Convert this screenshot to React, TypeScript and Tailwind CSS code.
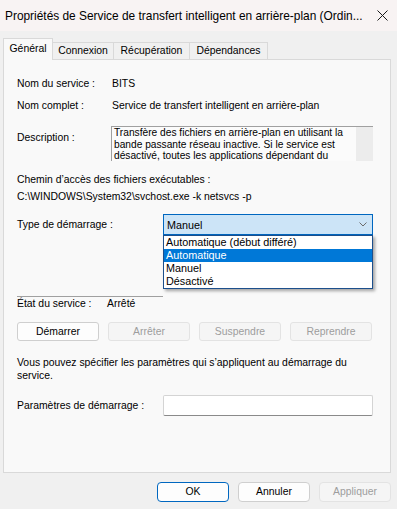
export default function App() {
  const descLines = [
    "Transfère des fichiers en arrière-plan en utilisant la",
    "bande passante réseau inactive. Si le service est",
    "désactivé, toutes les applications dépendant du",
  ];
  return (
    <div className="w-[397px] h-[509px] bg-[#f0f0f0] flex flex-col overflow-hidden text-[10.4px] leading-[14px] text-black font-['Liberation_Sans',Arial,sans-serif]">
      {/* Title bar */}
      <div className="h-[31px] shrink-0 bg-[#f8f3f3] flex items-center justify-between pl-[5px] pr-[9px]">
        <span className="text-[11.9px] leading-[14px] whitespace-nowrap">
          Propriétés de Service de transfert intelligent en arrière-plan (Ordin...
        </span>
        <svg width="11" height="11" viewBox="0 0 11 11" className="shrink-0">
          <path d="M0.5 0.5 L10.5 10.5 M10.5 0.5 L0.5 10.5" stroke="#1a1a1a" strokeWidth="1" />
        </svg>
      </div>

      {/* Tabs */}
      <div className="h-[28px] shrink-0 flex items-end pl-[3px]">
        <div className="relative z-10 -mb-px h-[22px] w-[50px] bg-[#f9f9f9] border border-b-0 border-[#d9d9d9] flex items-center justify-center pb-[2px]">
          Général
        </div>
        <div className="h-[17px] w-[61px] border border-l-0 border-b-0 border-[#d9d9d9] flex items-center justify-center">
          Connexion
        </div>
        <div className="h-[17px] w-[76px] border border-l-0 border-b-0 border-[#d9d9d9] flex items-center justify-center">
          Récupération
        </div>
        <div className="h-[17px] w-[78px] border border-l-0 border-b-0 border-[#d9d9d9] flex items-center justify-center">
          Dépendances
        </div>
      </div>

      {/* Panel */}
      <div className="h-[414px] shrink-0 ml-[3px] mr-[6px] bg-[#f9f9f9] border border-[#d9d9d9] pl-[13px] flex flex-col">
        <div className="mt-[17px] flex">
          <div className="w-[95px]">Nom du service :</div>
          <div>BITS</div>
        </div>
        <div className="mt-[8px] flex">
          <div className="w-[95px]">Nom complet :</div>
          <div>Service de transfert intelligent en arrière-plan</div>
        </div>
        <div className="mt-[13px] flex">
          <div className="w-[94px] mt-[5px]">Description :</div>
          <div className="w-[262px] h-[35px] border-t border-l border-[#a0a0a0] bg-[#fbfbfb] flex overflow-hidden">
            <div className="flex-1 pl-[2px] text-[10.2px] leading-[11.5px] overflow-hidden">
              {descLines.map((l) => (
                <div key={l} className="whitespace-nowrap">{l}</div>
              ))}
            </div>
            <div className="w-[17px] bg-[#ececec]" />
          </div>
        </div>
        <div className="mt-[12px]">Chemin d’accès des fichiers exécutables :</div>
        <div className="mt-[3px]">C:\WINDOWS\System32\svchost.exe -k netsvcs -p</div>
        <div className="mt-[10px] flex items-center">
          <div className="w-[146px]">Type de démarrage :</div>
          <div className="relative w-[210px] h-[21px] bg-[#cce4f7] border border-[#0067c0] flex items-center justify-between pl-[3px] pr-[5px] text-[10.8px]">
            <span>Manuel</span>
            <svg width="8" height="5" viewBox="0 0 8 5">
              <path d="M0.5 0.5 L4 4 L7.5 0.5" fill="none" stroke="#6b6b6b" strokeWidth="1" />
            </svg>
            <div className="absolute left-[-1px] top-[20px] w-[210px] z-20 bg-white border border-[#1c4f8c] shadow-[2px_2px_3px_rgba(0,0,0,0.35)] flex flex-col leading-[13px]">
              <div className="h-[13px] pl-[2px]">Automatique (début différé)</div>
              <div className="h-[13px] pl-[2px] bg-[#0078d7] text-white">Automatique</div>
              <div className="h-[13px] pl-[2px]">Manuel</div>
              <div className="h-[13px] pl-[2px]">Désactivé</div>
            </div>
          </div>
        </div>
        <div className="mt-[61px] h-px w-[146px] bg-[#a0a0a0]" />
        <div className="mt-[1px] flex leading-[12px]">
          <div className="w-[90px]">État du service :</div>
          <div>Arrêté</div>
        </div>
        <div className="mt-[12px] flex gap-[9px]">
          <div className="w-[82px] h-[19px] rounded-[3px] bg-[#fdfdfd] border border-[#cfcfcf] flex items-center justify-center">
            Démarrer
          </div>
          <div className="w-[82px] h-[19px] rounded-[3px] bg-[#f5f5f5] border border-[#e3e3e3] text-[#9d9d9d] flex items-center justify-center">
            Arrêter
          </div>
          <div className="w-[82px] h-[19px] rounded-[3px] bg-[#f5f5f5] border border-[#e3e3e3] text-[#9d9d9d] flex items-center justify-center">
            Suspendre
          </div>
          <div className="w-[82px] h-[19px] rounded-[3px] bg-[#f5f5f5] border border-[#e3e3e3] text-[#9d9d9d] flex items-center justify-center">
            Reprendre
          </div>
        </div>
        <div className="mt-[15px] leading-[13px]">
          <div>Vous pouvez spécifier les paramètres qui s’appliquent au démarrage du</div>
          <div>service.</div>
        </div>
        <div className="mt-[13px] flex items-center">
          <div className="w-[146px]">Paramètres de démarrage :</div>
          <div className="w-[210px] h-[21px] bg-white border border-[#d4d4d4] border-b-[#8a8a8a] rounded-[2px]" />
        </div>
      </div>

      {/* Bottom buttons */}
      <div className="flex-1 flex justify-end items-start pt-[9px] pr-[6px] gap-[9px]">
        <div className="w-[72px] h-[20px] rounded-[4px] bg-[#fdfdfd] border border-[#0067c0] flex items-center justify-center">
          OK
        </div>
        <div className="w-[72px] h-[20px] rounded-[4px] bg-[#fdfdfd] border border-[#cfcfcf] flex items-center justify-center">
          Annuler
        </div>
        <div className="w-[72px] h-[20px] rounded-[4px] bg-[#f5f5f5] border border-[#e3e3e3] text-[#9d9d9d] flex items-center justify-center">
          Appliquer
        </div>
      </div>
    </div>
  );
}
